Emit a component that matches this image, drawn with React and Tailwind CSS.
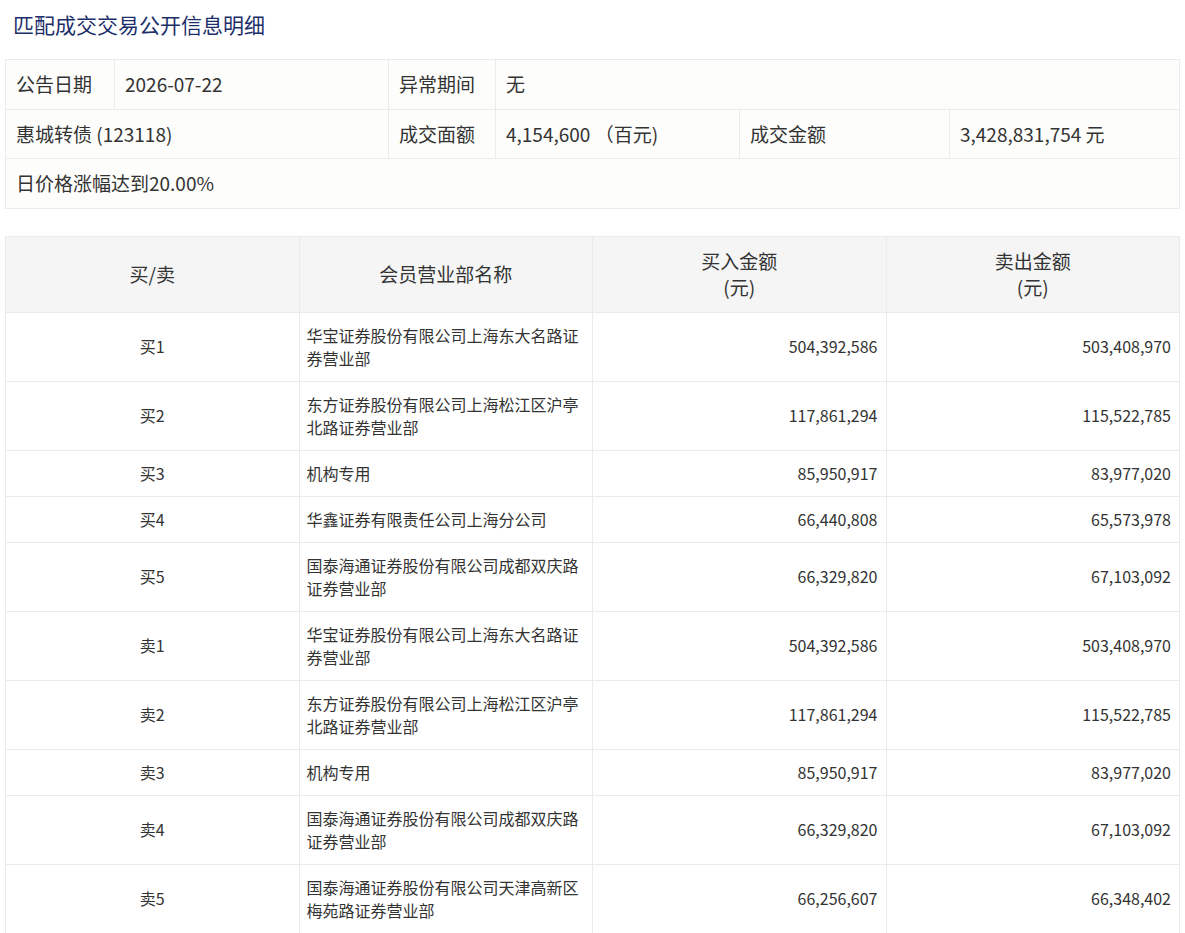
import React from "react";

const rows = [
  { side: "买1", name: "华宝证券股份有限公司上海东大名路证券营业部", buy: "504,392,586", sell: "503,408,970" },
  { side: "买2", name: "东方证券股份有限公司上海松江区沪亭北路证券营业部", buy: "117,861,294", sell: "115,522,785" },
  { side: "买3", name: "机构专用", buy: "85,950,917", sell: "83,977,020" },
  { side: "买4", name: "华鑫证券有限责任公司上海分公司", buy: "66,440,808", sell: "65,573,978" },
  { side: "买5", name: "国泰海通证券股份有限公司成都双庆路证券营业部", buy: "66,329,820", sell: "67,103,092" },
  { side: "卖1", name: "华宝证券股份有限公司上海东大名路证券营业部", buy: "504,392,586", sell: "503,408,970" },
  { side: "卖2", name: "东方证券股份有限公司上海松江区沪亭北路证券营业部", buy: "117,861,294", sell: "115,522,785" },
  { side: "卖3", name: "机构专用", buy: "85,950,917", sell: "83,977,020" },
  { side: "卖4", name: "国泰海通证券股份有限公司成都双庆路证券营业部", buy: "66,329,820", sell: "67,103,092" },
  { side: "卖5", name: "国泰海通证券股份有限公司天津高新区梅苑路证券营业部", buy: "66,256,607", sell: "66,348,402" },
];

const info = "border border-[#ebebeb] px-[10px] py-[11px] text-left font-normal";
const head = "border border-[#ebebeb] px-[7px] py-[11px] text-center font-normal";
const cell = "border border-[#ebebeb] px-[7px] py-[11px]";

export default function App() {
  return (
    <div className="min-h-screen bg-white px-[5px] pb-[1px] text-[#333] [font-family:'Noto_Sans_CJK_SC',sans-serif]">
      <h1 className="pl-[8px] pt-[9px] text-[21px] leading-[30px] font-normal text-[#1d2f6a]">
        匹配成交交易公开信息明细
      </h1>

      <table className="mt-[20px] w-full table-fixed border-collapse bg-[#fdfdfb] text-[19px] leading-[26.6px]">
        <colgroup>
          <col className="w-[109px]" />
          <col className="w-[274px]" />
          <col className="w-[107px]" />
          <col className="w-[244px]" />
          <col className="w-[210px]" />
          <col />
        </colgroup>
        <tbody>
          <tr>
            <td className={info}>公告日期</td>
            <td className={info}>2026-07-22</td>
            <td className={info}>异常期间</td>
            <td className={info} colSpan={3}>无</td>
          </tr>
          <tr>
            <td className={info} colSpan={2}>惠城转债 (123118)</td>
            <td className={info}>成交面额</td>
            <td className={info}>4,154,600 （百元)</td>
            <td className={info}>成交金额</td>
            <td className={info}>3,428,831,754 元</td>
          </tr>
          <tr>
            <td className={info} colSpan={6}>日价格涨幅达到20.00%</td>
          </tr>
        </tbody>
      </table>

      <table className="mt-[27px] w-full table-fixed border-collapse">
        <thead>
          <tr className="bg-[#f5f5f5] text-[19px] leading-[26.5px]">
            <th className={head}>买/卖</th>
            <th className={head}>会员营业部名称</th>
            <th className={head}>
              买入金额
              <br />
              (元)
            </th>
            <th className={head}>
              卖出金额
              <br />
              (元)
            </th>
          </tr>
        </thead>
        <tbody className="text-[16px] leading-[23px]">
          {rows.map((r) => (
            <tr key={r.side}>
              <td className={`${cell} text-center`}>{r.side}</td>
              <td className={`${cell} text-left`}>{r.name}</td>
              <td className={`${cell} pr-[8px] text-right`}>{r.buy}</td>
              <td className={`${cell} pr-[8px] text-right`}>{r.sell}</td>
            </tr>
          ))}
        </tbody>
      </table>
    </div>
  );
}
